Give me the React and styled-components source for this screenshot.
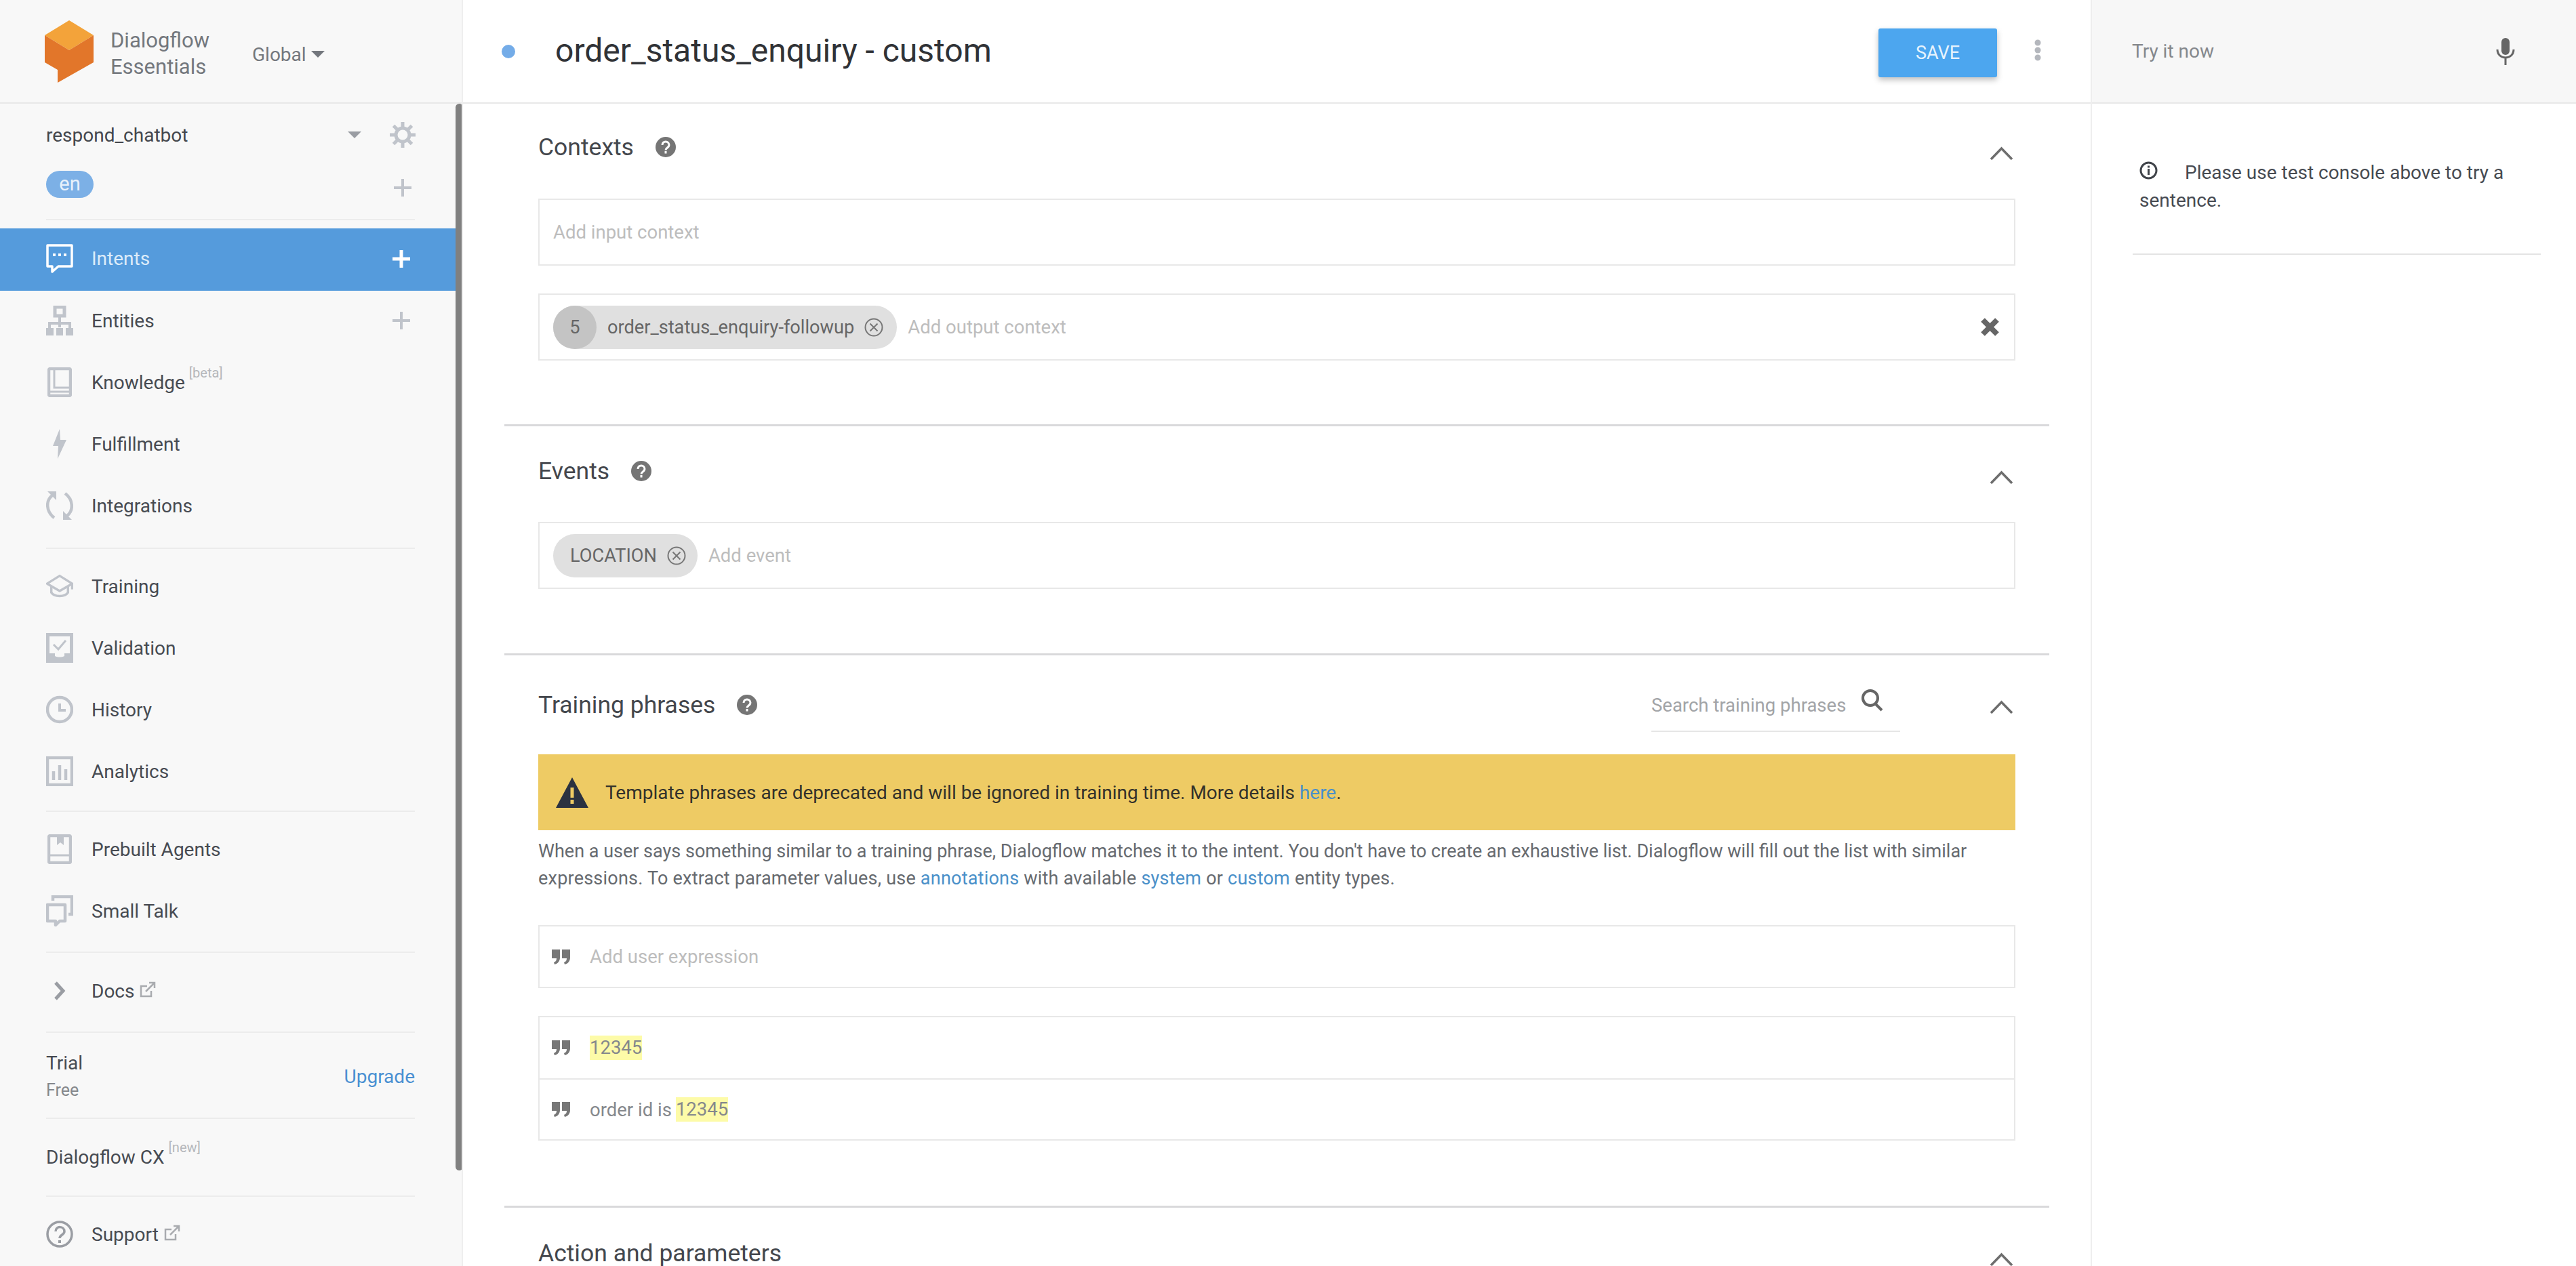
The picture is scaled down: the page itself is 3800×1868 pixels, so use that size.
import styled, { createGlobalStyle } from 'styled-components';

const Global = createGlobalStyle`
  html, body { margin: 0; padding: 0; background: #fff; }
  body { font-family: Roboto, "Liberation Sans", sans-serif; color: #474b52; overflow: hidden; }
  * { box-sizing: border-box; }
`
const Page = styled.div`
  display: grid;
  grid-template-columns: 683px 2403px 714px;
  width: 3800px;
  height: 1868px;
  overflow: hidden;
`
const Sidebar = styled.aside`
  position: relative;
  background: #f8f8f8;
  border-right: 2px solid #eee;
  height: 1868px;
  overflow: hidden;
`
const Brand = styled.header`
  display: flex;
  align-items: center;
  height: 153px;
  padding-left: 66px;
  border-bottom: 2px solid #e8e8e8;
`
const BrandName = styled.div`
  margin: 6px 0 0 25px;
  width: 209px;
  font-size: 31px;
  line-height: 39px;
  color: #73777d;
`
const Region = styled.div`
  display: flex;
  align-items: center;
  margin-top: 9px;
  font-size: 28px;
  color: #73777d;
  gap: 7px;
`
const Caret = styled.span`
  width: 0;
  height: 0;
  border-left: ${p => p.$size}px solid transparent;
  border-right: ${p => p.$size}px solid transparent;
  border-top: ${p => p.$size}px solid ${p => p.$color};
`
const Thumb = styled.div`
  position: absolute;
  top: 153px;
  left: 672px;
  width: 11px;
  height: 1574px;
  border-radius: 6px;
  background: #808080;
`
const Nav = styled.nav`
  width: 672px;
`
const AgentRow = styled.div`
  display: flex;
  align-items: center;
  height: 92px;
  padding-left: 68px;
  font-size: 28px;
  color: #44474d;
`
const AgentName = styled.span`
  flex: 1;
`
const Gear = styled.svg`
  margin: 0 59px 0 42px;
`
const LangRow = styled.div`
  display: flex;
  align-items: center;
  justify-content: space-between;
  height: 54px;
  padding: 0 64px 0 68px;
  margin-bottom: 24px;
`
const Pill = styled.span`
  width: 70px;
  height: 40px;
  border-radius: 20px;
  background: #7cb0e6;
  color: #e8f1fb;
  font-size: 29px;
  line-height: 39px;
  text-align: center;
`
const LangAdd = styled.span`
  display: flex;
  margin-top: 10px;
`
const Rule = styled.div`
  height: 2px;
  margin: 0 60px 0 68px;
  background: #ececec;
`
const Group = styled.div`
  padding: ${p => p.$top}px 0 ${p => p.$bottom}px;
`
const NavItem = styled.div`
  display: flex;
  align-items: center;
  height: ${p => p.$active ? 92 : 91}px;
  padding: 0 66px 3px 68px;
  background: ${p => p.$active ? '#559bdc' : 'transparent'};
  color: ${p => p.$active ? '#dcebf9' : '#474b52'};
  font-size: 28px;
`
const NavIcon = styled.span`
  display: flex;
  justify-content: center;
  width: 40px;
  margin-right: 27px;
`
const NavLabel = styled.span`
  flex: 1;
  white-space: nowrap;
`
const Sup = styled.sup`
  margin-left: 6px;
  font-size: 20px;
  line-height: 0;
  color: #b5b7bb;
  vertical-align: 17px;
`
const PlanRow = styled.div`
  display: flex;
  align-items: center;
  justify-content: space-between;
  height: 125px;
  padding: 3px 60px 0 68px;
`
const PlanName = styled.div`
  font-size: 28px;
  color: #474b52;
  line-height: 41px;
`
const PlanTier = styled.div`
  font-size: 25px;
  color: #85888c;
  line-height: 40px;
`
const Upgrade = styled.a`
  font-size: 28px;
  color: #4a90d2;
`
const PlainRow = styled.div`
  display: flex;
  align-items: center;
  height: 113px;
  padding-left: 68px;
  font-size: 28px;
`
const Main = styled.main`
  height: 1868px;
  overflow: hidden;
  border-right: 2px solid #eee;
`
const TopBar = styled.header`
  display: flex;
  align-items: center;
  height: 153px;
  padding-left: 57px;
  border-bottom: 2px solid #e8e8e8;
`
const Dot = styled.span`
  width: 20px;
  height: 20px;
  border-radius: 50%;
  background: #74ace8;
`
const Title = styled.h1`
  flex: 1;
  margin: 0 0 2px 59px;
  font-size: 48px;
  font-weight: 400;
  color: #303236;
`
const Save = styled.button`
  width: 175px;
  height: 72px;
  margin-top: 4px;
  border: 0;
  border-radius: 3px;
  background: #4ca6ef;
  color: #e6f3fd;
  font: 400 27px Roboto, sans-serif;
  box-shadow: 0 4px 8px rgba(0, 0, 0, 0.25);
`
const Dots = styled.svg`
  margin: 0 72px 4px 54px;
`
const Section = styled.section`
  margin: 0 61px;
  padding: 0 50px ${p => p.$bottom}px;
  border-bottom: ${p => p.$last ? '0' : '3px solid #d9d9db'};
`
const Head = styled.div`
  display: flex;
  align-items: center;
  height: ${p => p.$height}px;
  margin-bottom: ${p => p.$after}px;
`
const HeadTitle = styled.h2`
  margin: 0;
  font-size: 35.5px;
  line-height: 40px;
  font-weight: 400;
  color: #44474d;
`
const Help = styled.svg`
  margin-left: 32px;
`
const Search = styled.div`
  display: flex;
  align-items: flex-start;
  justify-content: space-between;
  width: 367px;
  height: 70px;
  margin: 10px 0 0 auto;
  padding-top: 14px;
  border-bottom: 2px solid #e6e6e6;
  font-size: 27.500px;
  color: #a2a4a7;
`
const SearchIcon = styled.svg`
  margin: -8px 24px 0 0;
`
const Chevron = styled.svg`
  margin-left: ${p => p.$solo ? 'auto' : '132px'};
  margin-right: 3px;
  margin-top: ${p => p.$drop}px;
`
const Field = styled.div`
  display: flex;
  align-items: center;
  height: ${p => p.$height || 99}px;
  margin-top: ${p => p.$gap || 0}px;
  padding: 0 22px 0 ${p => p.$inset || 20}px;
  border: 2px solid #e8e8e8;
  font-size: 27.500px;
  color: #bdbdbd;
`
const Chip = styled.span`
  display: flex;
  align-items: center;
  height: 64px;
  padding: ${p => p.$number ? '0 20px 0 0' : '0 17px 0 25px'};
  margin-right: 16px;
  border-radius: 32px;
  background: #e0e0e0;
  color: #666;
  font-size: 27.200px;
  white-space: nowrap;
`
const Count = styled.span`
  width: 64px;
  height: 64px;
  margin-right: 16px;
  border-radius: 50%;
  background: #c4c4c4;
  line-height: 64px;
  text-align: center;
`
const ChipClose = styled.svg`
  margin-left: 15px;
`
const Clear = styled.svg`
  margin-left: auto;
`
const Banner = styled.div`
  display: flex;
  align-items: center;
  height: 112px;
  padding-left: 26px;
  background: #eecb64;
  font-size: 28px;
  color: #33322b;
`
const BannerText = styled.span`
  margin-left: 25px;
`
const TextLink = styled.a`
  color: #4a90c9;
`
const Description = styled.p`
  margin: 11px 0 49px;
  font-size: 27px;
  line-height: 40px;
  color: #666a6f;
`
const DescriptionLine = styled.span`
  display: block;
  letter-spacing: ${p => p.$tracking || 0}px;
  white-space: nowrap;
`
const PhraseList = styled.div`
  margin-top: 41px;
  border: 2px solid #e8e8e8;
`
const Phrase = styled.div`
  display: flex;
  align-items: center;
  height: 90px;
  padding-left: 18px;
  font-size: 27.500px;
  color: ${p => p.$empty ? '#bdbdbd' : '#85888c'};
  border-top: ${p => p.$divided ? '2px solid #e8e8e8' : '0'};
`
const QuoteMark = styled.svg`
  margin-right: 29px;
`
const Mark = styled.mark`
  display: inline-block;
  height: 36px;
  line-height: 36px;
  margin-left: ${p => p.$after ? '6px' : '0'};
  background: #fdfba8;
  color: #85888c;
`
const Tester = styled.aside`
  height: 1868px;
`
const TesterBar = styled.div`
  display: flex;
  align-items: center;
  justify-content: space-between;
  height: 153px;
  padding: 0 90px 0 59px;
  background: #f7f7f7;
  border-bottom: 2px solid #e8e8e8;
  font-size: 28px;
  color: #85888c;
`
const Hint = styled.div`
  margin: 0 52px 0 60px;
  padding: 81px 0 58px 10px;
  border-bottom: 2px solid #e4e4e4;
  font-size: 28px;
  line-height: 41px;
  color: #474b52;
`
const HintIcon = styled.svg`
  vertical-align: -1px;
  margin-right: 40px;
`

const grey = '#c0c4cb'

const Plus = ({ color = grey, weight = 4 }) => (
  <svg width="28" height="28" viewBox="0 0 28 28">
    <path d="M14 1v26M1 14h26" stroke={color} strokeWidth={weight} fill="none" />
  </svg>
)

const IntentIcon = () => (
  <svg width="40" height="44" viewBox="0 0 40 44" fill="none">
    <path d="M2 2h36v31H18l-9 8v-8H2z" stroke="#fff" strokeWidth="3.5" strokeLinejoin="round" />
    <path d="M10 16h4M18 16h4M26 16h4" stroke="#fff" strokeWidth="4" />
  </svg>
)
const EntityIcon = () => (
  <svg width="40" height="44" viewBox="0 0 40 44" fill="none" stroke={grey}>
    <rect x="13" y="2" width="14" height="13" strokeWidth="5" />
    <path d="M20 15v17M5 34v-8h30v8" strokeWidth="4" />
    <path d="M0 33h11v11H0zM15 33h10v11H15zM29 33h11v11H29z" fill={grey} strokeWidth="0" />
  </svg>
)
const BookIcon = () => (
  <svg width="36" height="44" viewBox="0 0 36 44" fill="none" stroke={grey} strokeWidth="4.500">
    <rect x="2" y="2" width="32" height="40" rx="2" />
    <path d="M10 2v28h24M2 36h32" strokeWidth="3" />
  </svg>
)
const BoltIcon = () => (
  <svg width="22" height="44" viewBox="0 0 22 44">
    <path d="M11 0L1 25h8l-1 19 13-28h-9z" fill={grey} />
  </svg>
)
const SyncIcon = () => (
  <svg width="40" height="46" viewBox="0 0 40 46" fill="none" stroke={grey} strokeWidth="4.500">
    <path d="M9 8C-1 16 0 32 12 41" />
    <path d="M31 38c10-8 9-24-3-33" />
    <path d="M2 2h13v13z" fill={grey} strokeWidth="0" />
    <path d="M38 44H25V31z" fill={grey} strokeWidth="0" />
  </svg>
)
const CapIcon = () => (
  <svg width="52" height="44" viewBox="0 0 52 44" fill="none" stroke={grey} strokeWidth="4.500">
    <path d="M26 2L2 17l24 14 24-14z" strokeLinejoin="round" />
    <path d="M10 22v12c6 9 26 9 32 0V22" />
    <path d="M50 17v11" />
  </svg>
)
const CheckIcon = () => (
  <svg width="40" height="44" viewBox="0 0 40 44" fill="none">
    <path d="M0 0h40v44H0zM5 5v25h8v4c4 2 10 2 14 0v-4h8V5z" fill={grey} fillRule="evenodd" />
    <path d="M11 17l7 7 11-13" stroke={grey} strokeWidth="3" />
  </svg>
)
const ClockIcon = () => (
  <svg width="40" height="44" viewBox="0 0 40 44" fill="none" stroke={grey}>
    <circle cx="20" cy="22" r="18" strokeWidth="4.500" />
    <path d="M20 13v10h9" strokeWidth="4" />
  </svg>
)
const ChartIcon = () => (
  <svg width="40" height="44" viewBox="0 0 40 44" fill="none" stroke={grey}>
    <rect x="2" y="2" width="36" height="40" strokeWidth="4.500" />
    <path d="M11 22v13M20 13v22M29 19v16" strokeWidth="4.500" />
  </svg>
)
const AgentsIcon = () => (
  <svg width="36" height="44" viewBox="0 0 36 44" fill="none" stroke={grey} strokeWidth="4.500">
    <rect x="2" y="2" width="32" height="40" rx="2" />
    <path d="M2 31h32" strokeWidth="3" />
    <path d="M14 2h10v14l-5-4-5 4z" fill={grey} strokeWidth="0" />
  </svg>
)
const TalkIcon = () => (
  <svg width="40" height="46" viewBox="0 0 40 46" fill="none" stroke={grey} strokeWidth="4.500">
    <path d="M2 14h26v24H20l-6 6v-6H2z" strokeLinejoin="round" />
    <path d="M10 8V2h28v26h-5" />
  </svg>
)
const ChevronRight = () => (
  <svg width="18" height="28" viewBox="0 0 18 28" fill="none">
    <path d="M3 2l11 12L3 26" stroke="#9a9da3" strokeWidth="5" />
  </svg>
)
const OutGlyph = styled.svg`
  margin-left: 8px;
`
const OutLink = () => (
  <OutGlyph width="24" height="24" viewBox="0 0 24 24" fill="none" stroke="#a9abaf" strokeWidth="2.500">
    <path d="M17 14v8H2V7h9M9 15L22 2M14 2h8v8" />
  </OutGlyph>
)
const SupportIcon = () => (
  <svg width="40" height="44" viewBox="0 0 40 44" fill="none" stroke="#9a9da3">
    <circle cx="20" cy="22" r="18" strokeWidth="3.500" />
    <path d="M14 18c0-9 13-8 13 0 0 5-7 5-7 10" strokeWidth="3.500" />
    <path d="M20 31v4" strokeWidth="4" />
  </svg>
)
const CloseCircle = ({ size = 28 }) => (
  <ChipClose width={size} height={size} viewBox="0 0 28 28" fill="none" stroke="#777">
    <circle cx="14" cy="14" r="12.500" strokeWidth="2" />
    <path d="M8.500 8.500l11 11M19.500 8.500l-11 11" strokeWidth="2" />
  </ChipClose>
)
const HelpIcon = () => (
  <Help width="30" height="30" viewBox="0 0 30 30">
    <circle cx="15" cy="15" r="15" fill="#757575" />
    <path d="M10 12c0-7 10-6.500 10 0 0 4-5 4-5 7.500" fill="none" stroke="#fff" strokeWidth="3" />
    <rect x="13.500" y="21" width="3" height="3.500" fill="#fff" />
  </Help>
)
const Up = ({ drop, solo = true }) => (
  <Chevron $drop={drop} $solo={solo} width="35" height="21" viewBox="0 0 35 21" fill="none">
    <path d="M2 19L17.500 3 33 19" stroke="#6d6d6d" strokeWidth="3.500" />
  </Chevron>
)
const Quote = () => (
  <QuoteMark width="27" height="22" viewBox="0 0 27 22" fill="#777">
    <path d="M0 0h12v12c0 5-3 9-8 10l-1-3c3-1 4-3 4-6H0zM15 0h12v12c0 5-3 9-8 10l-1-3c3-1 4-3 4-6h-7z" />
  </QuoteMark>
)

function App() {
  return (
    <Page>
      <Global />
      <Sidebar>
        <Brand>
          <svg width="72" height="92" viewBox="0 0 72 92">
            <path d="M36 0l36 22-36 22L0 22z" fill="#f3a33a" />
            <path d="M0 22l36 22 36-22v40L19 92V73L0 62z" fill="#e2762a" />
          </svg>
          <BrandName>Dialogflow Essentials</BrandName>
          <Region>Global <Caret $size={10} $color="#73777d" /></Region>
        </Brand>
        <Thumb />
        <Nav>
          <AgentRow>
            <AgentName>respond_chatbot</AgentName>
            <Caret $size={10} $color="#9a9da3" />
            <Gear width="38" height="38" viewBox="0 0 38 38" fill="none" stroke={grey}>
              <circle cx="19" cy="19" r="10" strokeWidth="5" />
              <path d="M19 0v8M19 30v8M0 19h8M30 19h8M5.500 5.500l6 6M26.500 26.500l6 6M32.500 5.500l-6 6M11.500 26.500l-6 6" strokeWidth="5" />
            </Gear>
          </AgentRow>
          <LangRow>
            <Pill>en</Pill>
            <LangAdd><Plus /></LangAdd>
          </LangRow>
          <Rule />
          <Group $top={12} $bottom={15}>
            <NavItem $active>
              <NavIcon><IntentIcon /></NavIcon>
              <NavLabel>Intents</NavLabel>
              <Plus color="#fff" weight={5} />
            </NavItem>
            <NavItem>
              <NavIcon><EntityIcon /></NavIcon>
              <NavLabel>Entities</NavLabel>
              <Plus />
            </NavItem>
            <NavItem>
              <NavIcon><BookIcon /></NavIcon>
              <NavLabel>Knowledge<Sup>[beta]</Sup></NavLabel>
            </NavItem>
            <NavItem>
              <NavIcon><BoltIcon /></NavIcon>
              <NavLabel>Fulfillment</NavLabel>
            </NavItem>
            <NavItem>
              <NavIcon><SyncIcon /></NavIcon>
              <NavLabel>Integrations</NavLabel>
            </NavItem>
          </Group>
          <Rule />
          <Group $top={11} $bottom={11}>
            <NavItem>
              <NavIcon><CapIcon /></NavIcon>
              <NavLabel>Training</NavLabel>
            </NavItem>
            <NavItem>
              <NavIcon><CheckIcon /></NavIcon>
              <NavLabel>Validation</NavLabel>
            </NavItem>
            <NavItem>
              <NavIcon><ClockIcon /></NavIcon>
              <NavLabel>History</NavLabel>
            </NavItem>
            <NavItem>
              <NavIcon><ChartIcon /></NavIcon>
              <NavLabel>Analytics</NavLabel>
            </NavItem>
          </Group>
          <Rule />
          <Group $top={11} $bottom={13}>
            <NavItem>
              <NavIcon><AgentsIcon /></NavIcon>
              <NavLabel>Prebuilt Agents</NavLabel>
            </NavItem>
            <NavItem>
              <NavIcon><TalkIcon /></NavIcon>
              <NavLabel>Small Talk</NavLabel>
            </NavItem>
          </Group>
          <Rule />
          <Group $top={12} $bottom={13}>
            <NavItem>
              <NavIcon><ChevronRight /></NavIcon>
              <NavLabel>Docs<OutLink /></NavLabel>
            </NavItem>
          </Group>
          <Rule />
          <PlanRow>
            <div>
              <PlanName>Trial</PlanName>
              <PlanTier>Free</PlanTier>
            </div>
            <Upgrade>Upgrade</Upgrade>
          </PlanRow>
          <Rule />
          <PlainRow><NavLabel>Dialogflow CX<Sup>[new]</Sup></NavLabel></PlainRow>
          <Rule />
          <Group $top={11} $bottom={0}>
            <NavItem>
              <NavIcon><SupportIcon /></NavIcon>
              <NavLabel>Support<OutLink /></NavLabel>
            </NavItem>
          </Group>
        </Nav>
      </Sidebar>

      <Main>
        <TopBar>
          <Dot />
          <Title>order_status_enquiry - custom</Title>
          <Save>SAVE</Save>
          <Dots width="12" height="32" viewBox="0 0 12 32" fill="#b4b7bd">
            <circle cx="6" cy="5" r="4.500" />
            <circle cx="6" cy="16" r="4.500" />
            <circle cx="6" cy="27" r="4.500" />
          </Dots>
        </TopBar>

        <Section $bottom={94}>
          <Head $height={128} $after={12}>
            <HeadTitle>Contexts</HeadTitle>
            <HelpIcon />
            <Up drop={18} />
          </Head>
          <Field>Add input context</Field>
          <Field $gap={41}>
            <Chip $number>
              <Count>5</Count>
              order_status_enquiry-followup
              <CloseCircle />
            </Chip>
            Add output context
            <Clear width="27" height="27" viewBox="0 0 27 27">
              <path d="M3 3l21 21M24 3L3 24" stroke="#666" strokeWidth="8" />
            </Clear>
          </Field>
        </Section>

        <Section $bottom={95}>
          <Head $height={132} $after={9}>
            <HeadTitle>Events</HeadTitle>
            <HelpIcon />
            <Up drop={18} />
          </Head>
          <Field>
            <Chip>
              LOCATION
              <CloseCircle />
            </Chip>
            Add event
          </Field>
        </Section>

        <Section $bottom={96}>
          <Head $height={146} $after={0}>
            <HeadTitle>Training phrases</HeadTitle>
            <HelpIcon />
            <Search>
              Search training phrases
              <SearchIcon width="34" height="34" viewBox="0 0 34 34" fill="none" stroke="#666" strokeWidth="4">
                <circle cx="14" cy="14" r="11" />
                <path d="M21 22l10 10" />
              </SearchIcon>
            </Search>
            <Up drop={6} solo={false} />
          </Head>
          <Banner>
            <svg width="48" height="45" viewBox="0 0 48 45">
              <path fillRule="evenodd" d="M24 0l24 45H0zM21.500 15v15h5V15zM21.500 33v6h5v-6z" fill="#2b3240" />
            </svg>
            <BannerText>Template phrases are deprecated and will be ignored in training time. More details <TextLink>here</TextLink>.</BannerText>
          </Banner>
          <Description>
            <DescriptionLine>When a user says something similar to a training phrase, Dialogflow matches it to the intent. You don't have to create an exhaustive list. Dialogflow will fill out the list with similar</DescriptionLine>
            <DescriptionLine $tracking={0.22}>expressions. To extract parameter values, use <TextLink>annotations</TextLink> with available <TextLink>system</TextLink> or <TextLink>custom</TextLink> entity types.</DescriptionLine>
          </Description>
          <Field $height={93} $inset={18}>
            <Quote />
            Add user expression
          </Field>
          <PhraseList>
            <Phrase>
              <Quote />
              <Mark>12345</Mark>
            </Phrase>
            <Phrase $divided>
              <Quote />
              order id is
              <Mark $after>12345</Mark>
            </Phrase>
          </PhraseList>
        </Section>

        <Section $last $bottom={0}>
          <Head $height={134} $after={0}>
            <HeadTitle>Action and parameters</HeadTitle>
            <Up drop={18} />
          </Head>
        </Section>
      </Main>

      <Tester>
        <TesterBar>
          Try it now
          <svg width="28" height="40" viewBox="0 0 28 40" fill="none">
            <rect x="8" y="0" width="12" height="25" rx="6" fill="#666" />
            <path d="M2 17c0 16 24 16 24 0M14 30v10" stroke="#666" strokeWidth="3" />
          </svg>
        </TesterBar>
        <Hint>
          <HintIcon width="27" height="27" viewBox="0 0 27 27" fill="none" stroke="#40444a">
            <circle cx="13.500" cy="13.500" r="11.500" strokeWidth="3" />
            <path d="M13.500 11v9M13.500 6.500v3" strokeWidth="3" />
          </HintIcon>
          Please use test console above to try a sentence.
        </Hint>
      </Tester>
    </Page>
  )
}
export default App;
